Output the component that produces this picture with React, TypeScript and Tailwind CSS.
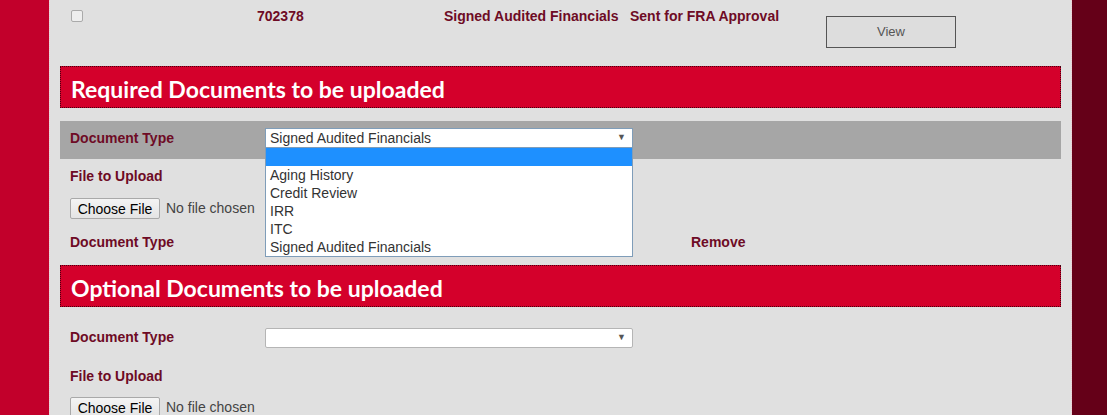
import React from 'react';

const label = 'font-bold text-[14px] leading-[21px] text-[#6e0b25]';

function SectionHeader({ title }: { title: string }) {
  return (
    <div className="h-[42px] bg-[#d4002b] border border-dotted border-[#4a0010] flex items-center pl-[10px] pt-[4px]">
      <h2 className="text-white font-bold text-[23px] leading-none" style={{ fontFamily: 'Lato, "Open Sans", sans-serif' }}>
        {title}
      </h2>
    </div>
  );
}

function Select({ value, open }: { value: string; open?: boolean }) {
  const options = ['', 'Aging History', 'Credit Review', 'IRR', 'ITC', 'Signed Audited Financials'];
  return (
    <div className="relative w-[368px]">
      <div
        className={`h-[20px] bg-white border flex items-center justify-between pl-[4px] pr-[6px] text-[14px] text-[#333] ${
          open ? 'border-[#7f9db9]' : 'border-[#b5b5b5] rounded-[2px]'
        }`}
      >
        <span>{value}</span>
        <span className="text-[9px] text-[#555]">▼</span>
      </div>
      {open && (
        <ul className="absolute left-0 top-[20px] w-[368px] bg-white border border-t-0 border-[#7f9db9] z-10">
          {options.map((o, i) => (
            <li
              key={i}
              className={`h-[18px] leading-[18px] pl-[4px] text-[14px] ${i === 0 ? 'bg-[#1e90ff] text-white' : 'text-[#333]'}`}
            >
              {o}
            </li>
          ))}
        </ul>
      )}
    </div>
  );
}

function FileInput() {
  return (
    <div className="flex items-center gap-[6px] text-[14px]">
      <button className="h-[21px] w-[90px] border border-[#a9a9a9] rounded-[2px] bg-gradient-to-b from-[#f4f4f4] to-[#e4e4e4] text-black">
        Choose File
      </button>
      <span className="text-[#444]">No file chosen</span>
    </div>
  );
}

export default function App() {
  return (
    <div
      className="flex h-[415px] w-[1107px] overflow-hidden"
      style={{ fontFamily: '"Liberation Sans", Arial, sans-serif' }}
    >
      <div className="w-[49px] bg-[#c2002b]" />

      <div className="w-[1023px] bg-[#e0e0e0] border-l border-r border-dotted border-[#f2c9d0] px-[10px]">
        {/* previous document row */}
        <div className="flex h-[66px] pt-[6px]">
          <div className="w-[197px] pl-[11px] pt-[4px]">
            <div className="h-[12px] w-[12px] rounded-[2px] border border-[#aaa] bg-[#eee]" />
          </div>
          <div className={`w-[187px] ${label}`}>702378</div>
          <div className={`w-[186px] ${label}`}>Signed Audited Financials</div>
          <div className={`w-[196px] ${label}`}>Sent for FRA Approval</div>
          <div className="pt-[10px]">
            <button className="h-[32px] w-[130px] bg-[#dddddd] border border-[#555] text-[13px] text-[#555]">
              View
            </button>
          </div>
        </div>

        <SectionHeader title="Required Documents to be uploaded" />

        <div className="mt-[13px] h-[38px] bg-[#a6a6a6] flex items-start pt-[7px] pl-[10px]">
          <div className={`w-[195px] ${label}`}>Document Type</div>
          <Select value="Signed Audited Financials" open />
        </div>

        <div className="pl-[10px]">
          <div className={`mt-[7px] ${label}`}>File to Upload</div>
          <div className="mt-[11px]">
            <FileInput />
          </div>
          <div className="mt-[13px] flex">
            <div className={`w-[621px] ${label}`}>Document Type</div>
            <div className={label}>Remove</div>
          </div>
        </div>

        <div className="mt-[12px]">
          <SectionHeader title="Optional Documents to be uploaded" />
        </div>

        <div className="pl-[10px]">
          <div className="mt-[20px] flex items-center">
            <div className={`w-[195px] ${label}`}>Document Type</div>
            <Select value="" />
          </div>
          <div className={`mt-[18px] ${label}`}>File to Upload</div>
          <div className="mt-[10px]">
            <FileInput />
          </div>
        </div>
      </div>

      <div className="w-[35px] bg-[#650018]" />
    </div>
  );
}
